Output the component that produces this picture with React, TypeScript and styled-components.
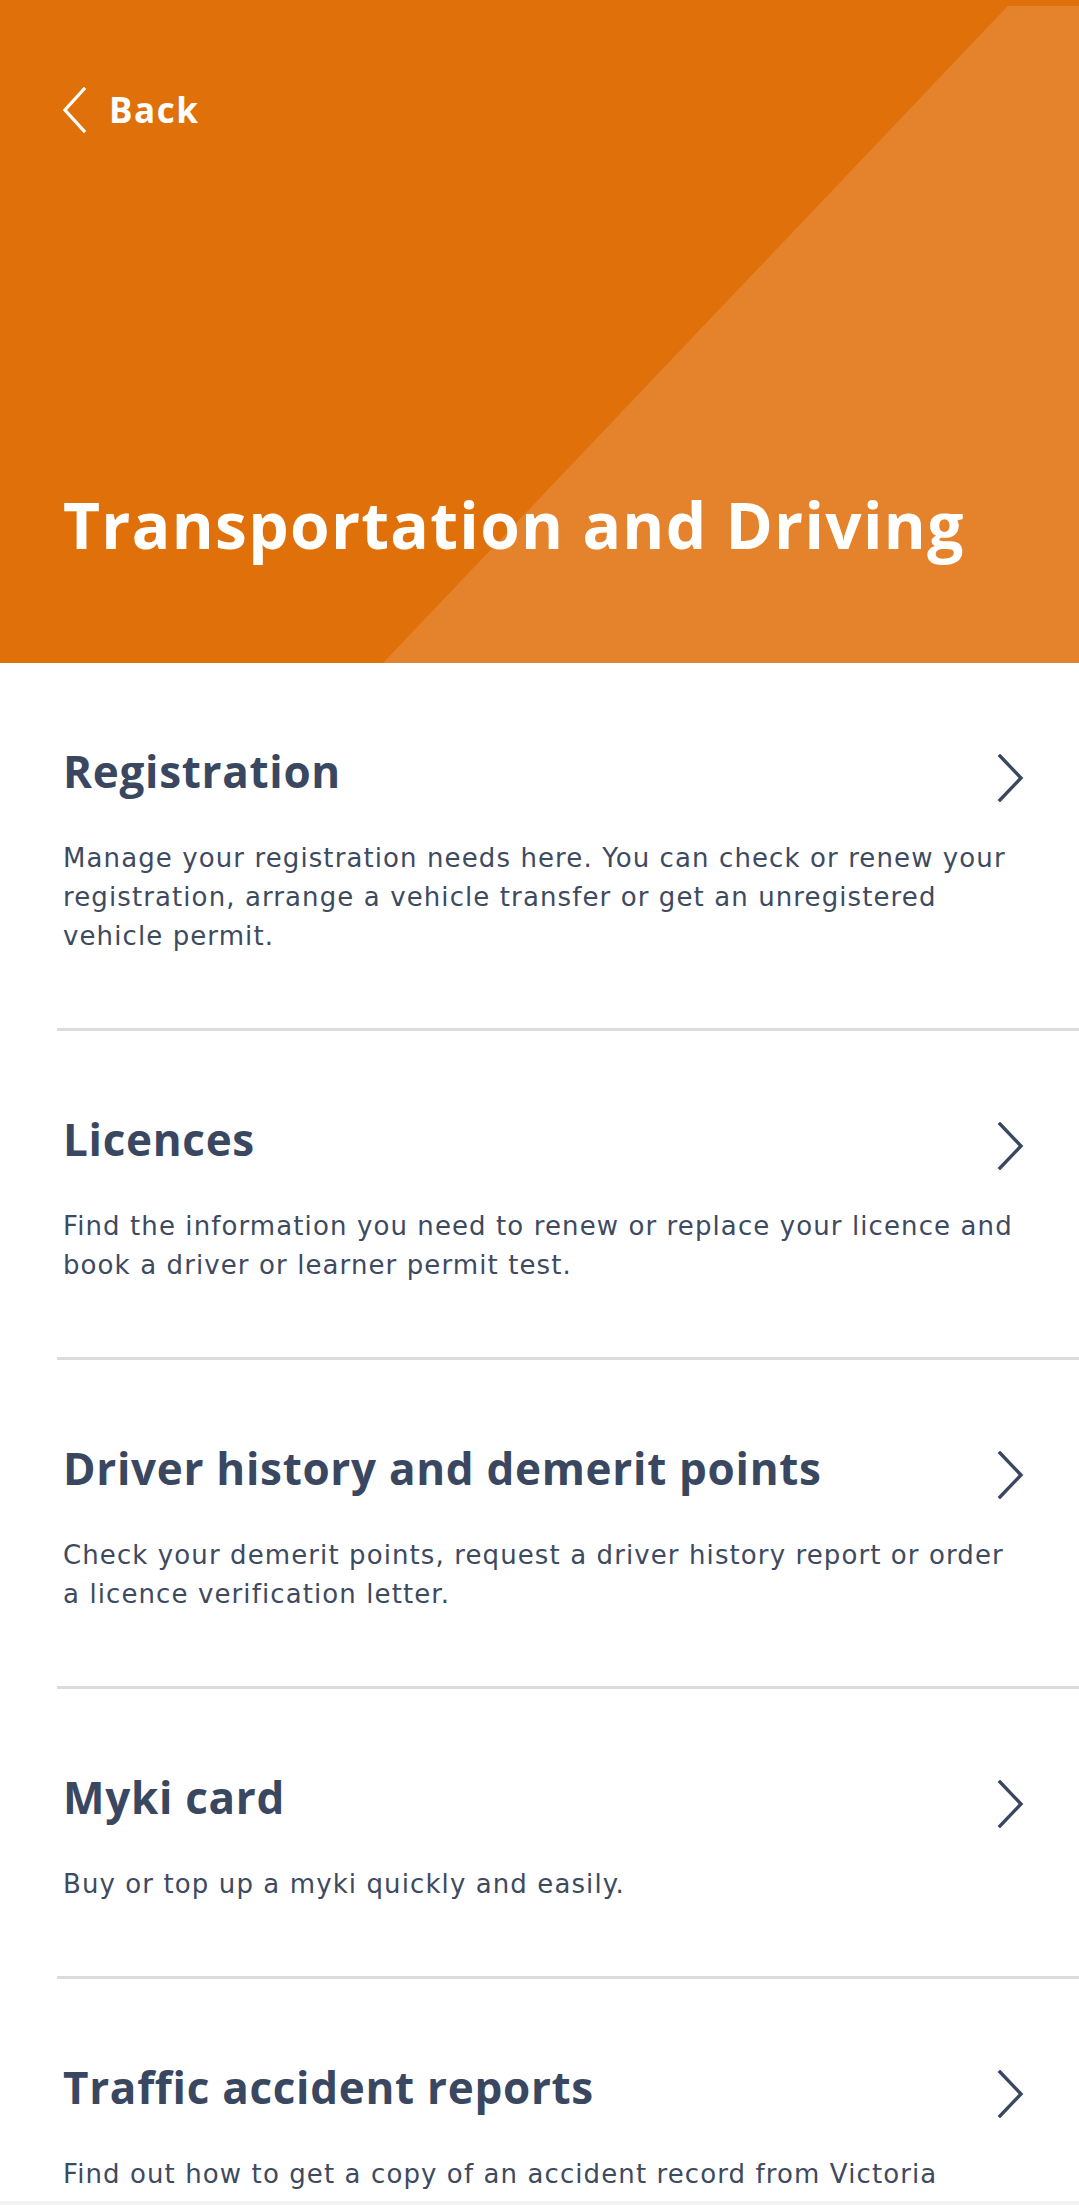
import styled, { createGlobalStyle } from 'styled-components';

const GlobalStyle = createGlobalStyle`
  * {
    box-sizing: border-box;
  }
  body {
    margin: 0;
    background: #ffffff;
    font-family: 'DejaVu Sans', 'Open Sans', sans-serif;
    -webkit-font-smoothing: antialiased;
  }
`;

type Topic = {
  title: string;
  lines: string[];
};

const topics: Topic[] = [
  {
    title: 'Registration',
    lines: [
      'Manage your registration needs here. You can check or renew your',
      'registration, arrange a vehicle transfer or get an unregistered',
      'vehicle permit.',
    ],
  },
  {
    title: 'Licences',
    lines: [
      'Find the information you need to renew or replace your licence and',
      'book a driver or learner permit test.',
    ],
  },
  {
    title: 'Driver history and demerit points',
    lines: [
      'Check your demerit points, request a driver history report or order',
      'a licence verification letter.',
    ],
  },
  {
    title: 'Myki card',
    lines: ['Buy or top up a myki quickly and easily.'],
  },
  {
    title: 'Traffic accident reports',
    lines: ['Find out how to get a copy of an accident record from Victoria'],
  },
];

const BackIcon = () => (
  <svg width='24' height='46' viewBox='0 0 24 46' fill='none'>
    <polyline
      points='21,2 2,23 21,44'
      stroke='#ffffff'
      strokeWidth='3.2'
      strokeLinecap='square'
      strokeLinejoin='miter'
    />
  </svg>
);

const ChevronIcon = () => (
  <svg width='28' height='48' viewBox='0 0 28 48' fill='none'>
    <polyline
      points='3,2 24,24 3,46'
      stroke='#3a4760'
      strokeWidth='3.4'
      strokeLinecap='square'
      strokeLinejoin='miter'
    />
  </svg>
);

const App = () => {
  return (
    <>
      <GlobalStyle />
      <Page>
        <Hero>
          <BackButton>
            <BackIcon />
            <BackLabel>Back</BackLabel>
          </BackButton>
          <HeroTitle>Transportation and Driving</HeroTitle>
        </Hero>
        <TopicList>
          {topics.map((topic) => (
            <TopicItem key={topic.title}>
              <TopicHead>
                <TopicTitle>{topic.title}</TopicTitle>
                <ChevronWrap>
                  <ChevronIcon />
                </ChevronWrap>
              </TopicHead>
              <TopicText>
                {topic.lines.map((line, i) => (
                  <span key={i}>
                    {line}
                    {i < topic.lines.length - 1 && <br />}
                  </span>
                ))}
              </TopicText>
            </TopicItem>
          ))}
        </TopicList>
        <BottomStrip />
      </Page>
    </>
  );
};

export default App;

const Page = styled.div`
  width: 100%;
  min-height: 100vh;
  background: #ffffff;
  overflow: hidden;
`;

const Hero = styled.header`
  position: relative;
  display: flex;
  flex-direction: column;
  height: 663px;
  padding: 86px 40px 100px 63px;
  background-color: #e0710a;
  overflow: hidden;
  &::before {
    content: '';
    position: absolute;
    inset: 0;
    background-color: #e4832c;
    clip-path: polygon(93.4% 6px, 100% 6px, 100% 100%, 35.5% 100%);
  }
`;

const BackButton = styled.div`
  position: relative;
  display: flex;
  align-items: center;
  gap: 22px;
  color: #ffffff;
`;

const BackLabel = styled.span`
  font-family: 'Open Sans', sans-serif;
  font-size: 35px;
  font-weight: 700;
  letter-spacing: 1.5px;
`;

const HeroTitle = styled.h1`
  position: relative;
  margin: auto 0 0;
  color: #ffffff;
  font-family: 'Open Sans', sans-serif;
  font-size: 64px;
  font-weight: 700;
  line-height: 76px;
  letter-spacing: 1.3px;
`;

const TopicList = styled.ul`
  list-style: none;
  margin: 0;
  padding: 0;
`;

const TopicItem = styled.li`
  margin-left: 57px;
  padding: 83px 54px 72px 6px;
  border-bottom: 3px solid #dcdcdc;
`;

const TopicHead = styled.div`
  display: flex;
  align-items: flex-start;
  justify-content: space-between;
  gap: 24px;
`;

const TopicTitle = styled.h2`
  margin: 0;
  color: #3a4760;
  font-family: 'Open Sans', sans-serif;
  font-size: 44px;
  font-weight: 700;
  line-height: 50px;
  letter-spacing: 0.7px;
`;

const ChevronWrap = styled.div`
  display: flex;
  margin-top: 8px;
  flex-shrink: 0;
`;

const TopicText = styled.p`
  margin: 37px 0 0;
  max-width: 1000px;
  color: #3e4a5f;
  font-size: 26px;
  line-height: 39px;
  letter-spacing: 1.1px;
`;

const BottomStrip = styled.div`
  position: fixed;
  left: 0;
  right: 0;
  bottom: 0;
  height: 4px;
  background: #f3f3f3;
`;
